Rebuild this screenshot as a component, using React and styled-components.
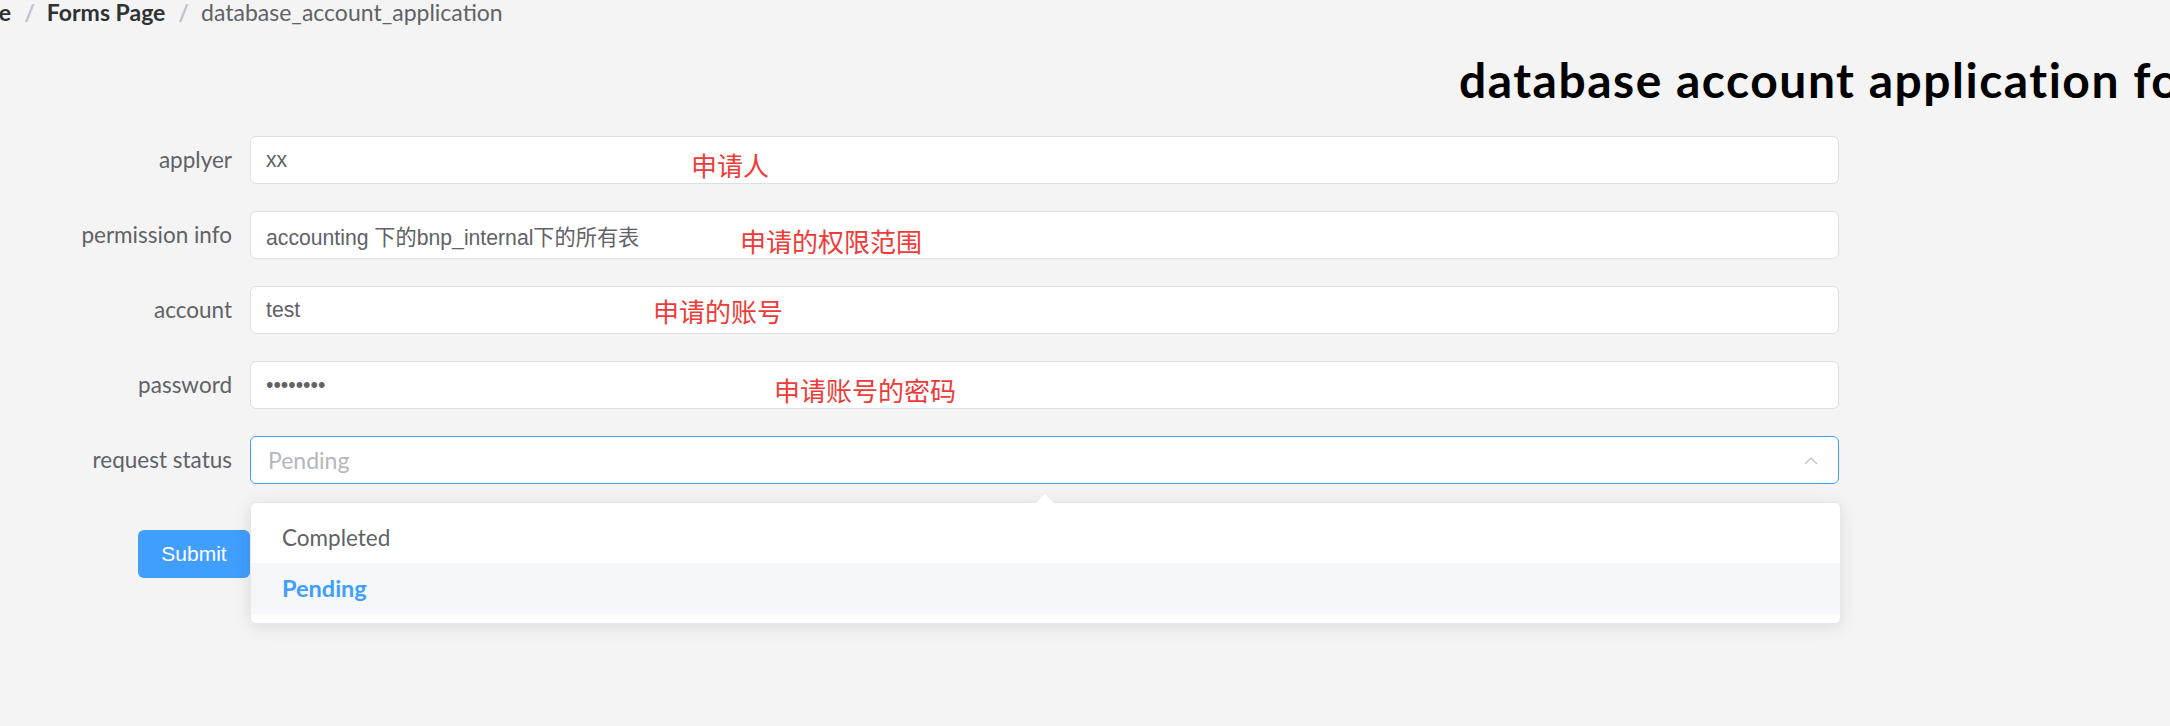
import React from 'react';
import styled, { createGlobalStyle } from 'styled-components';

const GlobalStyle = createGlobalStyle`
  html, body {
    margin: 0;
    background: #f4f4f4;
    overflow: hidden;
  }
  * { box-sizing: border-box; }
`;

const Page = styled.div`
  position: relative;
  width: 2170px;
  height: 726px;
  font-family: Lato, "Noto Sans", sans-serif;
  color: #606266;
`;

const Crumbs = styled.nav`
  display: flex;
  align-items: center;
  height: 25px;
  margin-left: -51px;
  font-size: 23px;
  line-height: 25px;
  white-space: nowrap;
`;

const Crumb = styled.span`
  font-weight: ${p => (p.current ? 400 : 700)};
  color: ${p => (p.current ? '#606266' : '#303133')};
`;

const Sep = styled.span`
  margin: 0 12px 0 13px;
  color: #c0c4cc;
  font-weight: 700;
`;

const Title = styled.h1`
  margin: 26px 0 0;
  padding-left: 1459px;
  font-size: 48px;
  line-height: 58px;
  font-weight: 700;
  letter-spacing: 1.5px;
  color: #000;
  white-space: nowrap;
`;

const Form = styled.form`
  display: flex;
  flex-direction: column;
  gap: 27px;
  margin-top: 27px;
`;

const Row = styled.div`
  display: flex;
  align-items: center;
  height: 48px;
`;

const Label = styled.label`
  width: 250px;
  padding-right: 18px;
  text-align: right;
  font-size: 22.5px;
  line-height: 48px;
  color: #606266;
`;

const Input = styled.input`
  width: 1589px;
  height: 48px;
  padding: 0 15px;
  border: 1px solid #dcdfe6;
  border-radius: 6px;
  background: #fff;
  font-family: "Liberation Sans", "Noto Sans CJK SC", sans-serif;
  font-size: 21.2px;
  color: #606266;
  outline: none;
`;

const SelectWrap = styled.div`
  position: relative;
  width: 1589px;
`;

const SelectBox = styled.div`
  display: flex;
  align-items: center;
  justify-content: space-between;
  height: 48px;
  padding: 0 20px 0 17px;
  border: 1px solid #409eff;
  border-radius: 6px;
  background: #fff;
  font-size: 23px;
  color: #b4b7bd;
`;

const Dropdown = styled.ul`
  position: absolute;
  top: 66px;
  left: 0;
  width: 1591px;
  margin: 0;
  padding: 9px 0;
  list-style: none;
  background: #fff;
  border: 1px solid #e4e7ed;
  border-radius: 6px;
  box-shadow: 0 3px 18px rgba(0, 0, 0, 0.1);
  z-index: 5;
`;

const Caret = styled.span`
  position: absolute;
  top: -9px;
  left: 785px;
  width: 0;
  height: 0;
  border-left: 9px solid transparent;
  border-right: 9px solid transparent;
  border-bottom: 9px solid #fff;
  filter: drop-shadow(0 -1px 0 #ebeef5);
`;

const Option = styled.li`
  height: 51px;
  padding: 0 31px;
  font-size: ${p => (p.selected ? '23.5px' : '22.5px')};
  line-height: 51px;
  font-weight: ${p => (p.selected ? 700 : 400)};
  color: ${p => (p.selected ? '#409eff' : '#606266')};
  background: ${p => (p.selected ? '#f5f7fa' : '#fff')};
`;

const Actions = styled.div`
  margin: 46px 0 0 138px;
`;

const Button = styled.button`
  width: 112px;
  height: 48px;
  border: none;
  border-radius: 6px;
  background: #409eff;
  color: #fff;
  font-family: "Liberation Sans", sans-serif;
  font-size: 21px;
`;

const Note = styled.span`
  position: absolute;
  font-family: "Noto Sans CJK SC", sans-serif;
  font-size: 26px;
  line-height: 26px;
  color: #ef3b37;
  white-space: nowrap;
`;

const notes = [
  { text: '申请人', x: 691, y: 152 },
  { text: '申请的权限范围', x: 740, y: 228 },
  { text: '申请的账号', x: 653, y: 298 },
  { text: '申请账号的密码', x: 774, y: 377 },
  { text: '账号申请后的创建状态', x: 495, y: 542 },
];

const fields = [
  { label: 'applyer', value: 'xx' },
  { label: 'permission info', value: 'accounting 下的bnp_internal下的所有表' },
  { label: 'account', value: 'test' },
  { label: 'password', value: 'abcdefgh', type: 'password' },
];

const App = () => {
  return (
    <Page>
      <GlobalStyle />
      <Crumbs>
        <Crumb>Home</Crumb>
        <Sep>/</Sep>
        <Crumb>Forms Page</Crumb>
        <Sep>/</Sep>
        <Crumb current>database_account_application</Crumb>
      </Crumbs>

      <Title>database account application form</Title>

      <Form onSubmit={e => e.preventDefault()}>
        {fields.map(f => (
          <Row key={f.label}>
            <Label>{f.label}</Label>
            <Input readOnly type={f.type || 'text'} defaultValue={f.value} />
          </Row>
        ))}
        <Row>
          <Label>request status</Label>
          <SelectWrap>
            <SelectBox>
              <span>Pending</span>
              <svg width="14" height="9" viewBox="0 0 14 9">
                <polyline points="1,8 7,2 13,8" fill="none" stroke="#c0c4cc" strokeWidth="1.4" />
              </svg>
            </SelectBox>
            <Dropdown>
              <Caret />
              <Option>Completed</Option>
              <Option selected>Pending</Option>
            </Dropdown>
          </SelectWrap>
        </Row>
      </Form>

      <Actions>
        <Button type="button">Submit</Button>
      </Actions>

      {notes.map(n => (
        <Note key={n.text} style={{ left: n.x, top: n.y }}>{n.text}</Note>
      ))}
    </Page>
  );
};

export default App;
